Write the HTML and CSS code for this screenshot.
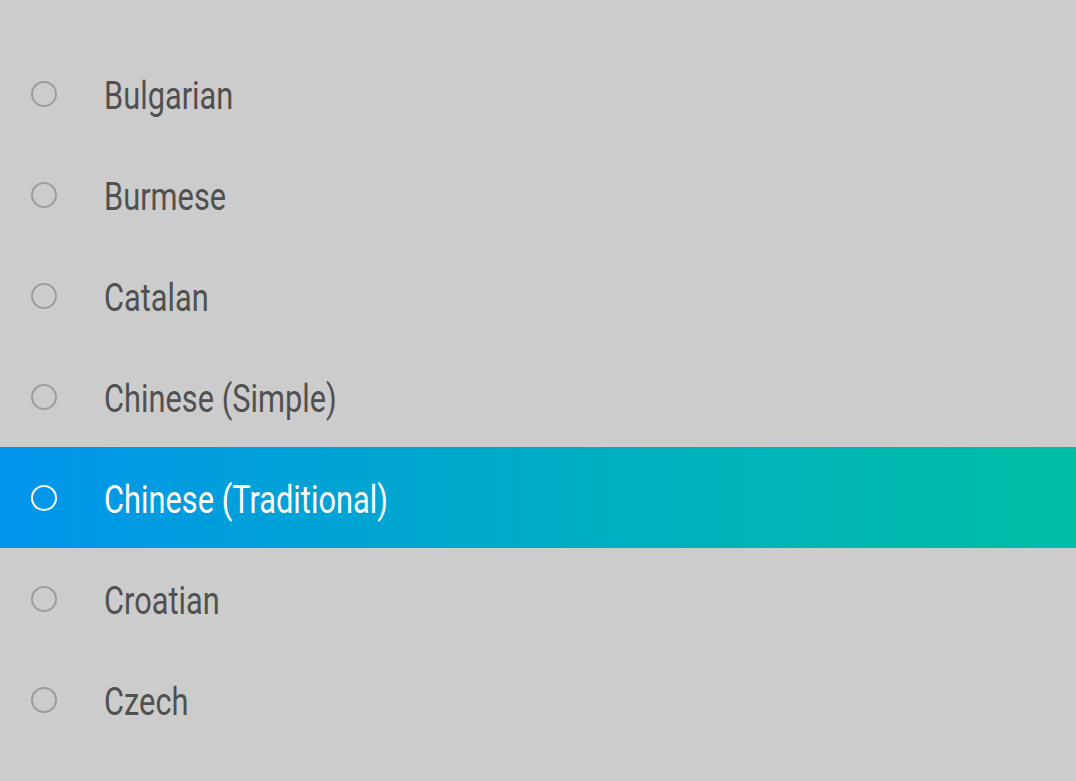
FILE: index.html
```html
<!DOCTYPE html>
<html>
<head>
<meta charset="utf-8">
<link rel="stylesheet" href="styles.css">
</head>
<body>
<ul class="list">
  <li class="row"><span class="radio"></span><span class="label">Bulgarian</span></li>
  <li class="row"><span class="radio"></span><span class="label">Burmese</span></li>
  <li class="row"><span class="radio"></span><span class="label">Catalan</span></li>
  <li class="row"><span class="radio"></span><span class="label">Chinese (Simple)</span></li>
  <li class="row active"><span class="radio"></span><span class="label">Chinese (Traditional)</span></li>
  <li class="row"><span class="radio"></span><span class="label">Croatian</span></li>
  <li class="row"><span class="radio"></span><span class="label">Czech</span></li>
</ul>
</body>
</html>
```
FILE: styles.css
```css
html, body {
  margin: 0;
  padding: 0;
  background: #cccccc;
  width: 1076px;
  height: 781px;
  overflow: hidden;
}
.list {
  list-style: none;
  margin: 0;
  padding: 43px 0 0 0;
  font-family: Roboto, "Noto Sans", sans-serif;
}
.row {
  height: 101px;
  display: flex;
  align-items: center;
  padding-left: 31px;
  color: #505050;
}
.radio {
  width: 22px;
  height: 22px;
  border: 2px solid #9c9c9c;
  border-radius: 50%;
  flex: none;
}
.label {
  margin-left: 47px;
  font-size: 38px;
  display: inline-block;
  transform: scaleX(0.81);
  transform-origin: left center;
  white-space: nowrap;
  position: relative;
  top: 2px;
}
.row.active {
  background: linear-gradient(90deg, #0094ec 0%, #00aec2 55%, #00bfa6 100%);
  color: #ffffff;
}
.row.active .radio {
  border-color: #ffffff;
}
```
